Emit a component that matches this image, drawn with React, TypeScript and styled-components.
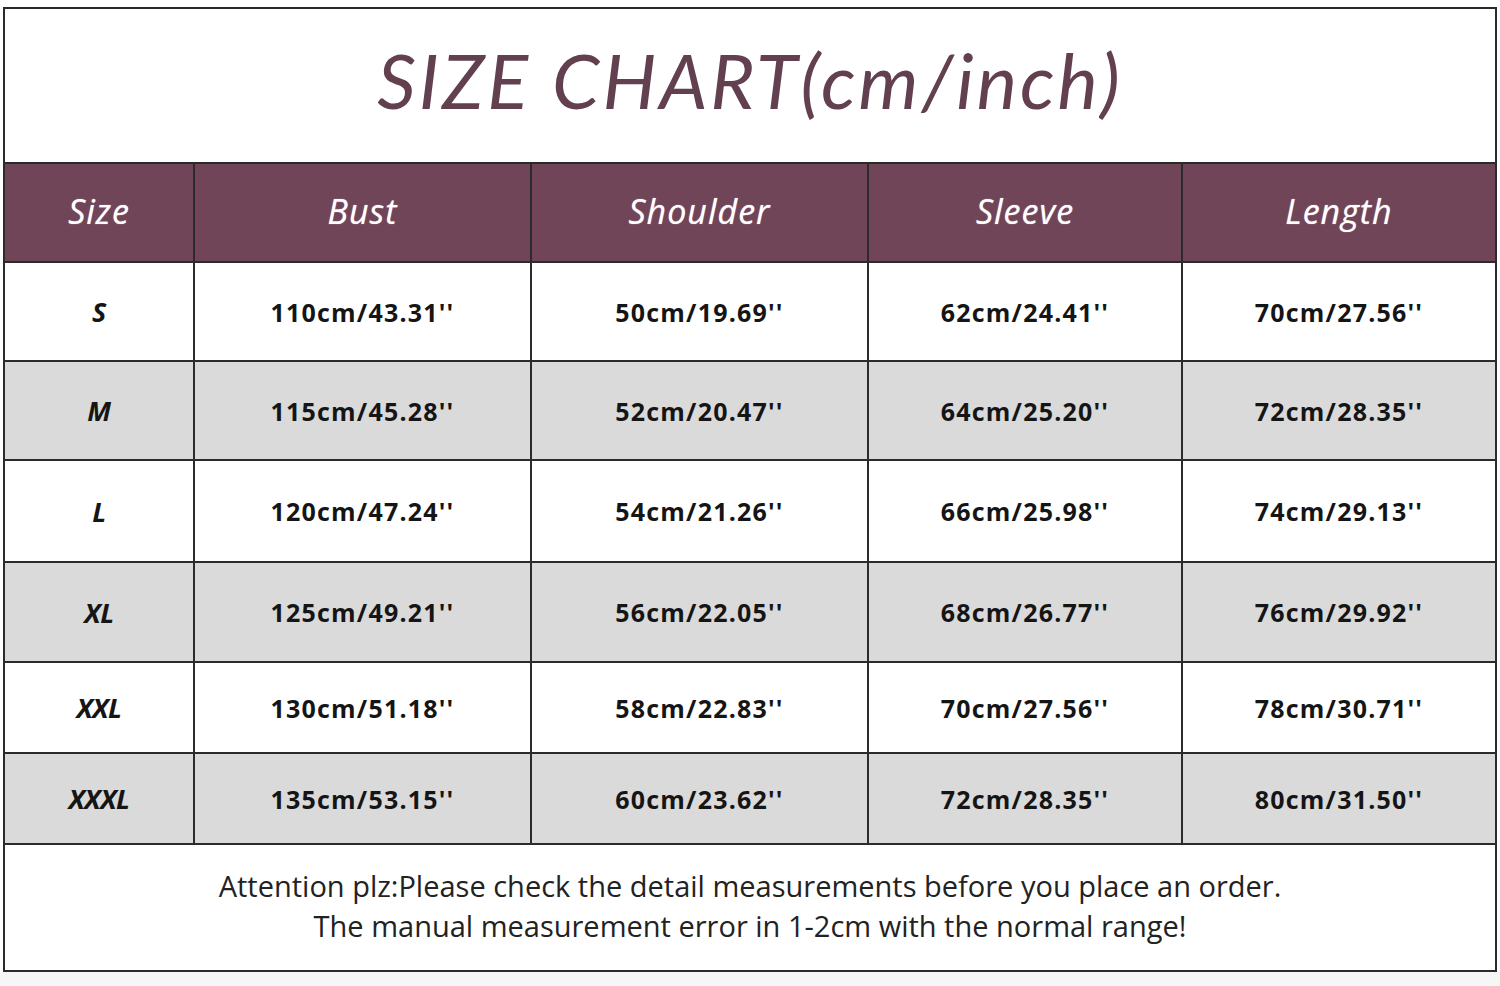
import React from "react";
import styled, { createGlobalStyle } from "styled-components";

const GlobalStyle = createGlobalStyle`
  html, body { margin: 0; padding: 0; background: #ffffff; }
  body { font-family: "Open Sans", "Liberation Sans", sans-serif; }
`;

const Page = styled.div`
  width: 1500px;
  height: 986px;
  padding: 7px 3px 0 3px;
  box-sizing: border-box;
  background: linear-gradient(#ffffff 0 972px, #f6f6f6 972px);
`;

const Chart = styled.div`
  width: 1494px;
  box-sizing: border-box;
  display: grid;
  grid-template-columns: 188px 335px 335px 312px 312px;
  grid-template-rows: 153px 97px 97px 97px 100px 98px 89px 89px 125px;
  gap: 2px;
  border: 2px solid #2b2b2b;
  background: #2b2b2b;
`;

const Title = styled.div`
  grid-column: 1 / -1;
  background: #ffffff;
  display: flex;
  align-items: center;
  justify-content: center;
  padding-bottom: 12px;
  box-sizing: border-box;
  font-family: "Lato", "Open Sans", sans-serif;
  font-style: italic;
  font-size: 76px;
  letter-spacing: 3px;
  color: #62404f;
`;

const HeadCell = styled.div`
  background: #6f4557;
  color: #ffffff;
  display: flex;
  align-items: center;
  justify-content: center;
  font-family: "Open Sans", sans-serif;
  font-style: italic;
  font-size: 34px;
  letter-spacing: 1px;
  padding-bottom: 4px;
  box-sizing: border-box;
  text-shadow: 0 0 1px #e9c9d6;
`;

const Cell = styled.div<{ $shade: boolean; $size?: boolean }>`
  background: ${(p) => (p.$shade ? "#dadada" : "#ffffff")};
  color: #151515;
  display: flex;
  align-items: center;
  justify-content: center;
  font-family: "Open Sans", sans-serif;
  font-weight: 700;
  font-size: ${(p) => (p.$size ? "27px" : "25px")};
  font-style: ${(p) => (p.$size ? "italic" : "normal")};
  letter-spacing: ${(p) => (p.$size ? "-0.5px" : "1.2px")};
`;

const Footer = styled.div`
  grid-column: 1 / -1;
  background: #ffffff;
  display: flex;
  flex-direction: column;
  align-items: center;
  justify-content: center;
  padding-bottom: 4px;
  box-sizing: border-box;
  font-family: "Open Sans", sans-serif;
  font-size: 29px;
  line-height: 40px;
  color: #222222;
`;

const headers = ["Size", "Bust", "Shoulder", "Sleeve", "Length"];

const rows: string[][] = [
  ["S", "110cm/43.31''", "50cm/19.69''", "62cm/24.41''", "70cm/27.56''"],
  ["M", "115cm/45.28''", "52cm/20.47''", "64cm/25.20''", "72cm/28.35''"],
  ["L", "120cm/47.24''", "54cm/21.26''", "66cm/25.98''", "74cm/29.13''"],
  ["XL", "125cm/49.21''", "56cm/22.05''", "68cm/26.77''", "76cm/29.92''"],
  ["XXL", "130cm/51.18''", "58cm/22.83''", "70cm/27.56''", "78cm/30.71''"],
  ["XXXL", "135cm/53.15''", "60cm/23.62''", "72cm/28.35''", "80cm/31.50''"],
];

export default function App() {
  return (
    <Page>
      <GlobalStyle />
      <Chart>
        <Title>SIZE CHART(cm/inch)</Title>
        {headers.map((h) => (
          <HeadCell key={h}>{h}</HeadCell>
        ))}
        {rows.map((r, i) =>
          r.map((v, j) => (
            <Cell key={`${i}-${j}`} $shade={i % 2 === 1} $size={j === 0}>
              {v}
            </Cell>
          ))
        )}
        <Footer>
          <div>Attention plz:Please check the detail measurements before you place an order.</div>
          <div>The manual measurement error in 1-2cm with the normal range!</div>
        </Footer>
      </Chart>
    </Page>
  );
}
